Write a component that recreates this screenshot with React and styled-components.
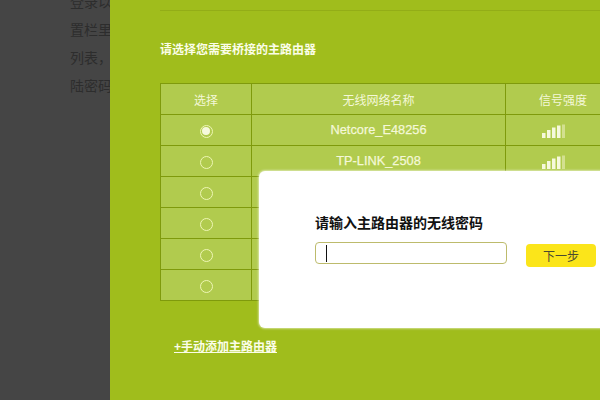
import styled, { createGlobalStyle } from "styled-components";

const GlobalStyle = createGlobalStyle`
  html, body {
    margin: 0;
    height: 100%;
    overflow: hidden;
  }
  body {
    font-family: "Liberation Sans", "Noto Sans CJK SC", sans-serif;
  }
`;

const networks = [
  { name: "Netcore_E48256", bars: true, selected: true },
  { name: "TP-LINK_2508", bars: true },
  { name: "" },
  { name: "" },
  { name: "" },
  { name: "" },
];

function SignalBars() {
  return (
    <svg width="24" height="14" viewBox="0 0 24 14">
      <rect x="0" y="9" width="3.5" height="5" fill="#f6f9dc" />
      <rect x="5" y="6" width="3.5" height="8" fill="#f6f9dc" />
      <rect x="10" y="3.5" width="3.5" height="10.5" fill="#f6f9dc" />
      <rect x="15" y="1.5" width="3.5" height="12.5" fill="#f6f9dc" />
      <rect x="20" y="0.5" width="3" height="13.5" fill="#d3e08f" />
    </svg>
  );
}

function App() {
  return (
    <>
      <GlobalStyle />
      <Page>
        <Article>
          <p>登录以</p>
          <p>置栏里</p>
          <p>列表，</p>
          <p>陆密码</p>
        </Article>
        <Panel>
          <TopRule />
          <Heading>请选择您需要桥接的主路由器</Heading>
          <Table>
            <colgroup>
              <col style={{ width: 91 }} />
              <col style={{ width: 254 }} />
              <col style={{ width: 115 }} />
            </colgroup>
            <thead>
              <tr>
                <th>选择</th>
                <th>无线网络名称</th>
                <th>信号强度</th>
              </tr>
            </thead>
            <tbody>
              {networks.map((n, i) => (
                <tr key={i}>
                  <td>
                    <Radio $selected={n.selected} />
                  </td>
                  <NameCell>{n.name}</NameCell>
                  <SignalCell>{n.bars && <SignalBars />}</SignalCell>
                </tr>
              ))}
            </tbody>
          </Table>
          <AddLink href="#">+手动添加主路由器</AddLink>
          <Modal>
            <ModalTitle>请输入主路由器的无线密码</ModalTitle>
            <ModalRow>
              <Field>
                <Caret />
              </Field>
              <NextButton>下一步</NextButton>
            </ModalRow>
          </Modal>
        </Panel>
      </Page>
    </>
  );
}

const Page = styled.div`
  display: flex;
  width: 600px;
  height: 400px;
  overflow: hidden;
`;

const Article = styled.div`
  width: 40px;
  flex: none;
  height: 400px;
  padding-left: 70px;
  background: #454545;
  color: #2d2d2d;
  font-size: 14px;
  overflow: hidden;
  white-space: nowrap;

  p {
    margin: 0;
    height: 28px;
    line-height: 28px;
  }

  p:first-child {
    margin-top: -12px;
  }
`;

const Panel = styled.div`
  position: relative;
  flex: 1;
  background: #a0bd1c;
  padding: 10px 0 0 50px;
  overflow: hidden;
`;

const TopRule = styled.div`
  height: 1px;
  background: #93ad17;
`;

const Heading = styled.h2`
  margin: 31px 0 0;
  font-size: 12px;
  line-height: 16px;
  font-weight: bold;
  color: #fbfde8;
`;

const Table = styled.table`
  margin-top: 25px;
  width: 460px;
  table-layout: fixed;
  border-collapse: collapse;
  background: #b1cb4e;
  color: #f4f8d8;
  font-size: 12px;
  text-align: center;

  th, td {
    height: 30px;
    padding: 0;
    border: 1px solid #7f9a0c;
    font-weight: normal;
    vertical-align: middle;
  }
`;

const NameCell = styled.td`
  && {
    height: 29px;
    padding-bottom: 1px;
    font-size: 12.8px;
    -webkit-text-stroke: 0.25px #f4f8d8;
  }
`;

const SignalCell = styled.td`
  svg {
    display: block;
    margin: 2px auto 0 36px;
  }
`;

const Radio = styled.span`
  display: block;
  position: relative;
  box-sizing: border-box;
  width: 13px;
  height: 13px;
  margin: 2px auto 0;
  border: 1.5px solid #eef6b4;
  border-radius: 50%;

  &::after {
    content: "";
    display: ${(p) => (p.$selected ? "block" : "none")};
    position: absolute;
    inset: 1.5px;
    border-radius: 50%;
    background: #f6f9dc;
  }
`;

const AddLink = styled.a`
  display: inline-block;
  margin: 38px 0 0 14px;
  font-size: 12px;
  line-height: 16px;
  font-weight: bold;
  color: #fbfde8;
`;

const Modal = styled.div`
  position: absolute;
  left: 149px;
  top: 171px;
  width: 380px;
  height: 157px;
  box-sizing: border-box;
  padding: 43px 0 0 56px;
  background: #fff;
  border-radius: 6px;
  box-shadow: 0 0 2px 1px rgba(255, 255, 255, 0.5);
`;

const ModalTitle = styled.div`
  font-size: 14px;
  line-height: 18px;
  font-weight: bold;
  color: #111;
`;

const ModalRow = styled.div`
  display: flex;
  align-items: flex-start;
  margin-top: 10px;
`;

const Field = styled.div`
  display: flex;
  align-items: center;
  box-sizing: border-box;
  width: 192px;
  height: 22px;
  padding-left: 10px;
  border: 1px solid #bdbb6c;
  border-radius: 4px;
`;

const Caret = styled.span`
  width: 1px;
  height: 17px;
  background: #111;
`;

const NextButton = styled.button`
  width: 70px;
  height: 23px;
  margin: 2px 0 0 19px;
  padding: 0;
  border: 0;
  border-radius: 4px;
  background: #fbe51a;
  color: #4a4a30;
  font-family: inherit;
  font-size: 12px;
`;

export default App;
